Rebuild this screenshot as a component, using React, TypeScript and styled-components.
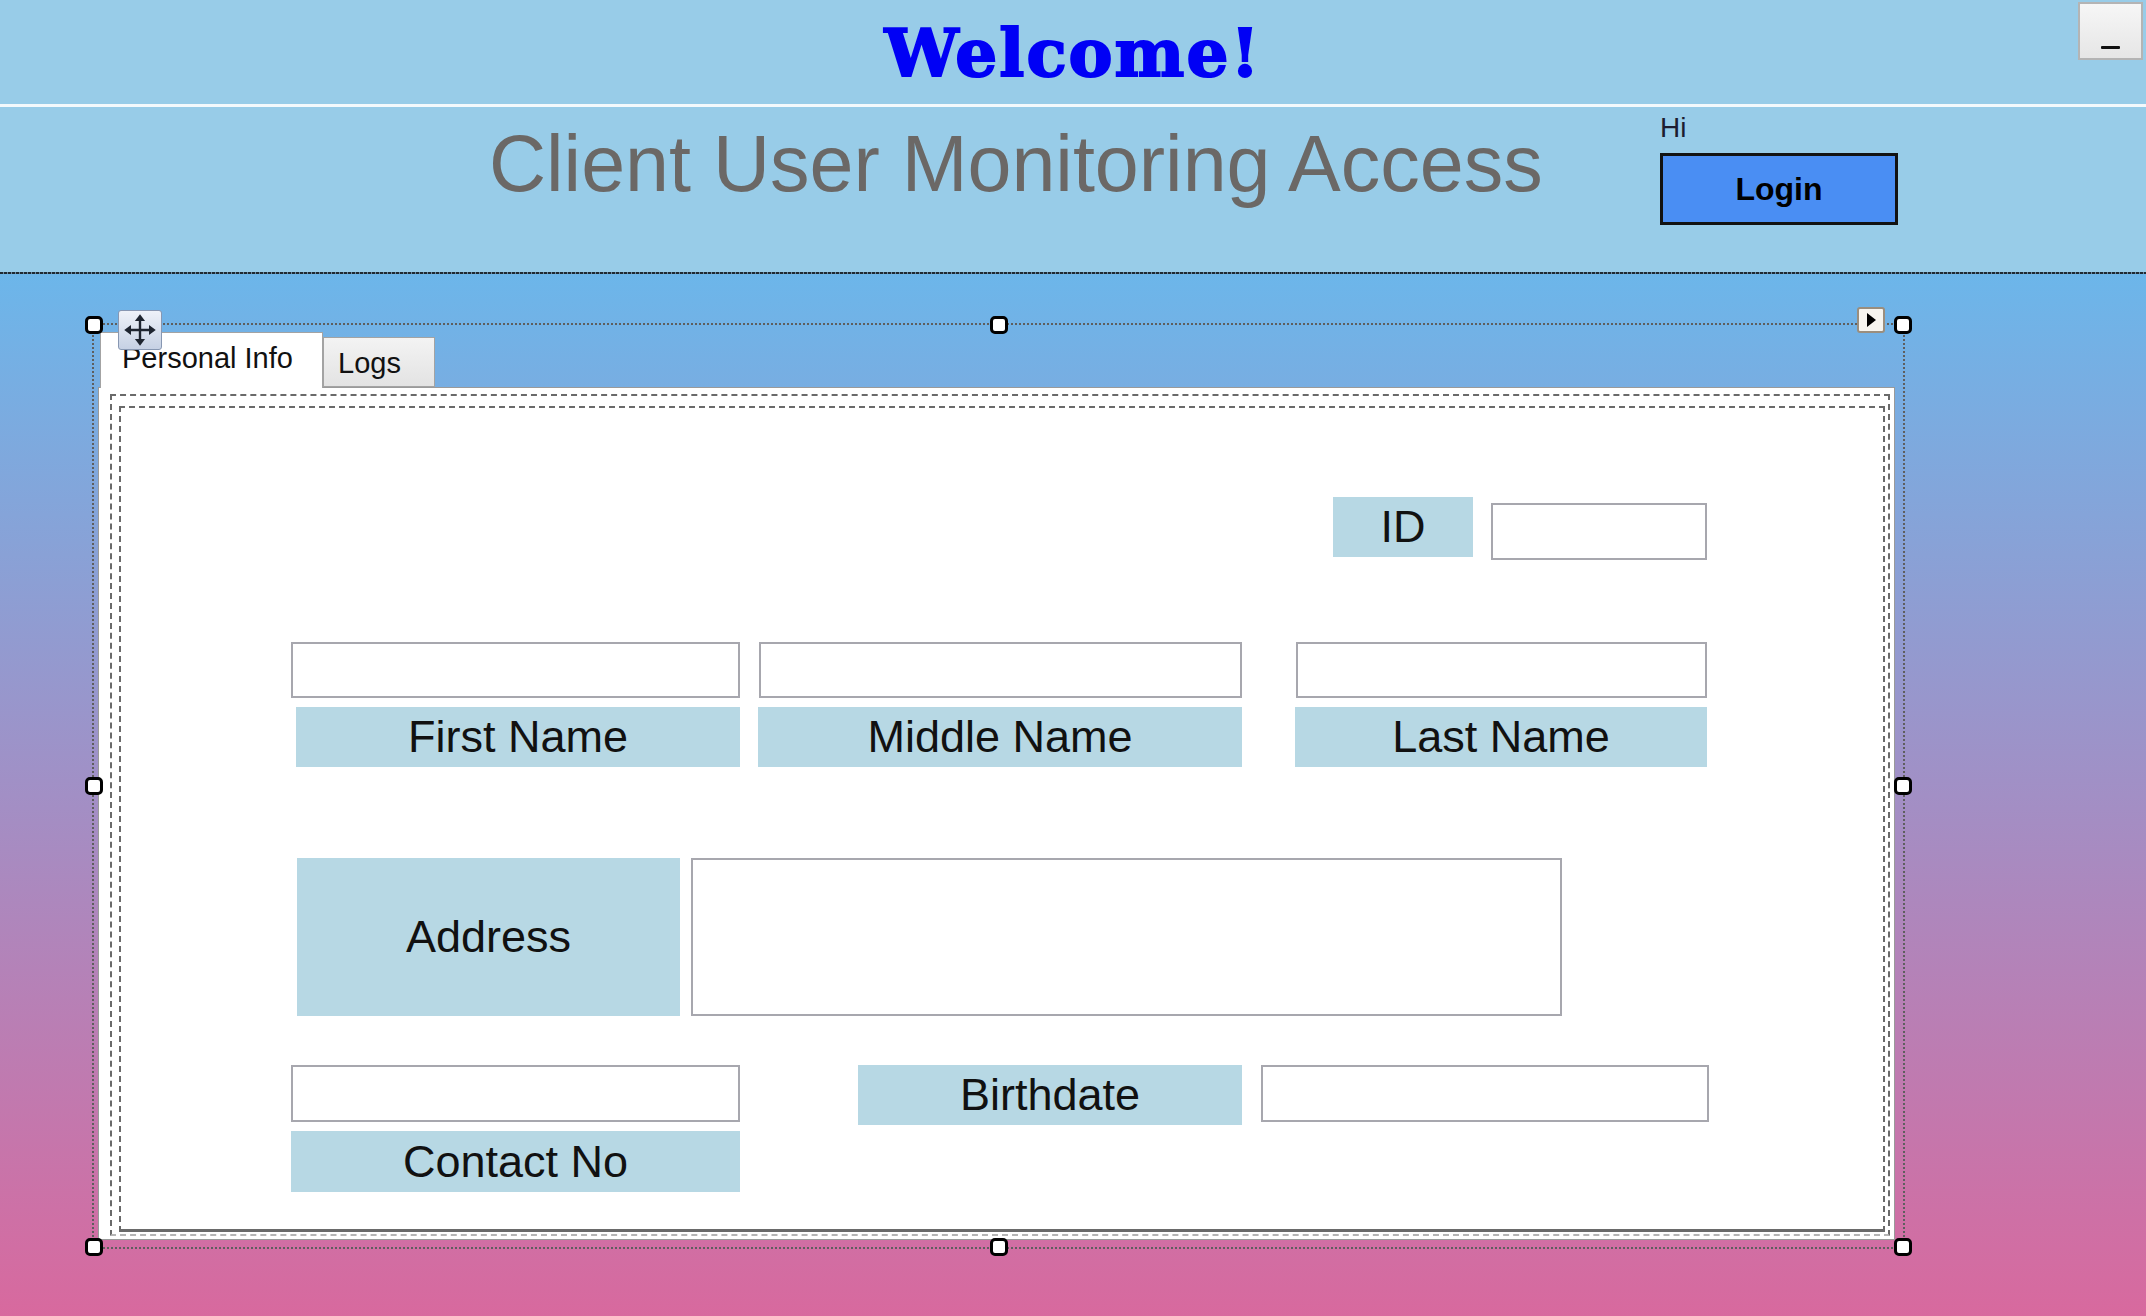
import React from "react";
import styled, { createGlobalStyle } from "styled-components";

const GlobalStyle = createGlobalStyle`
  html, body {
    margin: 0;
    padding: 0;
    height: 100%;
  }
  body {
    font-family: "Liberation Sans", Arial, sans-serif;
    overflow: hidden;
  }
  #root {
    height: 100%;
  }
`;

const Window = styled.div`
  height: 100%;
  display: flex;
  flex-direction: column;
`;

const WelcomeBar = styled.div`
  display: grid;
  grid-template-columns: 1fr auto 1fr;
  height: 104px;
  background: #98cce8;
  border-bottom: 3px solid #f3f9fc;
`;

const WelcomeText = styled.h1`
  grid-column: 2;
  margin: 20px 0 0;
  font-family: "DejaVu Serif", serif;
  font-weight: 700;
  font-size: 66px;
  letter-spacing: 2px;
  line-height: 1;
  color: #0000f5;
  -webkit-text-stroke: 2px #0000f5;
`;

const MinimizeButton = styled.div`
  grid-column: 3;
  justify-self: end;
  align-self: start;
  margin: 2px 3px 0 0;
  width: 65px;
  height: 58px;
  box-sizing: border-box;
  border: 2px solid #b4b4b4;
  background: linear-gradient(180deg, #f6f6f6 0%, #e6e6e6 100%);
  display: flex;
  align-items: flex-end;
  justify-content: center;
  padding-bottom: 9px;
`;

const MinimizeDash = styled.span`
  width: 19px;
  height: 3px;
  background: #111;
  border-radius: 1px;
`;

const TitleBar = styled.div`
  display: flex;
  justify-content: space-between;
  align-items: flex-start;
  height: 165px;
  box-sizing: border-box;
  padding: 0 248px 0 489px;
  background: #98cce8;
`;

const Title = styled.h2`
  margin: 17px 0 0;
  font-size: 79px;
  font-weight: 400;
  line-height: 1;
  color: #6b6866;
  white-space: nowrap;
`;

const UserBox = styled.div`
  display: flex;
  flex-direction: column;
  align-items: flex-start;
  margin-top: 7px;
`;

const Greeting = styled.span`
  font-size: 28px;
  line-height: 1;
  color: #1c1c30;
`;

const LoginButton = styled.button`
  margin-top: 11px;
  width: 238px;
  height: 72px;
  box-sizing: border-box;
  border: 3px solid #121212;
  background: #4a8ef3;
  font-family: "Liberation Sans", Arial, sans-serif;
  font-weight: 700;
  font-size: 32px;
  color: #000;
  padding: 0;
`;

const DashRule = styled.div`
  height: 2px;
  background: repeating-linear-gradient(90deg, #1f2a33 0 3px, #6a8aa3 3px 4px);
`;

const Canvas = styled.div`
  flex: 1;
  background: linear-gradient(180deg, #6cb6ea 0%, #a28fc5 50%, #d8699e 100%);
  padding: 49px 0 0 92px;
`;

const SelectionFrame = styled.div`
  position: relative;
  width: 1813px;
  height: 926px;
  box-sizing: border-box;
  border: 2px dotted #5e5e5e;
  padding: 7px 8px 7px 4px;
`;

const Handle = styled.span<{ $x: number; $y: number }>`
  position: absolute;
  left: ${({ $x }) => $x}%;
  top: ${({ $y }) => $y}%;
  transform: translate(-50%, -50%);
  width: 18px;
  height: 18px;
  box-sizing: border-box;
  border: 3px solid #000;
  border-radius: 5px;
  background: #fff;
  z-index: 3;
`;

const MoveGlyph = styled.div`
  position: absolute;
  left: 24px;
  top: -15px;
  width: 44px;
  height: 40px;
  box-sizing: border-box;
  border: 1px solid #8797b2;
  border-radius: 3px;
  background: linear-gradient(180deg, #eef2f9 0%, #c6d1e4 100%);
  display: flex;
  align-items: center;
  justify-content: center;
  z-index: 3;
`;

const SmartTag = styled.div`
  position: absolute;
  left: 1763px;
  top: -18px;
  width: 28px;
  height: 26px;
  box-sizing: border-box;
  border: 2px solid #9a8e7e;
  border-radius: 3px;
  background: #f7f5f0;
  display: flex;
  align-items: center;
  justify-content: center;
  z-index: 3;
`;

const TabControl = styled.div`
  height: 100%;
  display: flex;
  flex-direction: column;
`;

const TabStrip = styled.div`
  display: flex;
  align-items: flex-end;
  height: 55px;
  padding-left: 2px;
  position: relative;
  z-index: 1;
`;

const Tab = styled.div<{ $active?: boolean; $w: number; $pl: number }>`
  width: ${({ $w }) => $w}px;
  height: ${({ $active }) => ($active ? 56 : 50)}px;
  margin-bottom: ${({ $active }) => ($active ? -1 : 0)}px;
  box-sizing: border-box;
  border: 1px solid #a3a3a3;
  border-bottom: ${({ $active }) => ($active ? "none" : "1px solid #a3a3a3")};
  background: ${({ $active }) =>
    $active ? "#fff" : "linear-gradient(180deg, #f3f3f3 0%, #e3e3e3 100%)"};
  padding: 11px 0 0 ${({ $pl }) => $pl}px;
  font-size: 29px;
  line-height: 1;
  color: #111;
  white-space: nowrap;
`;

const TabPage = styled.div`
  flex: 1;
  display: flex;
  background: #fff;
  border: 1px solid #9a9a9a;
  padding: 6px 4px 3px 11px;
`;

const OuterPanel = styled.div`
  flex: 1;
  display: flex;
  border: 2px dashed #6a6a6a;
  border-bottom-color: #b5b5b5;
  padding: 10px 3px 2px 7px;
`;

const InnerPanel = styled.div`
  flex: 1;
  display: flex;
  flex-direction: column;
  border: 2px dashed #6a6a6a;
  border-bottom: 3px solid #6a6a6a;
`;

const FormRow = styled.div<{ $top: number; $left: number; $gap?: number }>`
  display: flex;
  align-items: flex-start;
  margin-top: ${({ $top }) => $top}px;
  padding-left: ${({ $left }) => $left}px;
  gap: ${({ $gap }) => $gap ?? 0}px;
`;

const FieldStack = styled.div<{ $w: number; $ml?: number }>`
  display: flex;
  flex-direction: column;
  gap: 9px;
  width: ${({ $w }) => $w}px;
  margin-left: ${({ $ml }) => $ml ?? 0}px;
`;

const FieldLabel = styled.div<{ $w?: number; $h: number; $ml?: number }>`
  width: ${({ $w }) => ($w ? `${$w}px` : "auto")};
  height: ${({ $h }) => $h}px;
  margin-left: ${({ $ml }) => $ml ?? 0}px;
  background: #b7d8e4;
  display: flex;
  align-items: center;
  justify-content: center;
  font-size: 45px;
  color: #111;
  white-space: nowrap;
`;

const TextBox = styled.input<{ $w?: number; $h: number; $mt?: number; $ml?: number }>`
  width: ${({ $w }) => ($w ? `${$w}px` : "100%")};
  height: ${({ $h }) => $h}px;
  margin: ${({ $mt }) => $mt ?? 0}px 0 0 ${({ $ml }) => $ml ?? 0}px;
  box-sizing: border-box;
  border: 2px solid #a7a7ae;
  background: #fff;
  padding: 0 8px;
  font-family: "Liberation Sans", Arial, sans-serif;
  font-size: 36px;
  outline: none;
`;

const TextArea = styled.textarea<{ $w: number; $h: number }>`
  width: ${({ $w }) => $w}px;
  height: ${({ $h }) => $h}px;
  box-sizing: border-box;
  border: 2px solid #a7a7ae;
  background: #fff;
  padding: 6px 8px;
  font-family: "Liberation Sans", Arial, sans-serif;
  font-size: 36px;
  resize: none;
  outline: none;
`;

const handles = [
  [0, 0],
  [50, 0],
  [100, 0],
  [0, 50],
  [100, 50],
  [0, 100],
  [50, 100],
  [100, 100],
];

const MoveIcon = () => (
  <svg width="36" height="36" viewBox="0 0 24 24">
    <path d="M12 5v14M5 12h14" stroke="#1e2530" strokeWidth="1.6" />
    <polygon points="12,1.5 8.6,6 15.4,6" fill="#1e2530" />
    <polygon points="12,22.5 8.6,18 15.4,18" fill="#1e2530" />
    <polygon points="1.5,12 6,8.6 6,15.4" fill="#1e2530" />
    <polygon points="22.5,12 18,8.6 18,15.4" fill="#1e2530" />
  </svg>
);

const ArrowIcon = () => (
  <svg width="12" height="16" viewBox="0 0 12 16">
    <polygon points="2,1 11,8 2,15" fill="#000" />
  </svg>
);

const App: React.FC = () => {
  return (
    <Window>
      <GlobalStyle />
      <WelcomeBar>
        <WelcomeText>Welcome!</WelcomeText>
        <MinimizeButton>
          <MinimizeDash />
        </MinimizeButton>
      </WelcomeBar>

      <TitleBar>
        <Title>Client User Monitoring Access</Title>
        <UserBox>
          <Greeting>Hi</Greeting>
          <LoginButton>Login</LoginButton>
        </UserBox>
      </TitleBar>
      <DashRule />

      <Canvas>
        <SelectionFrame>
          {handles.map(([x, y]) => (
            <Handle key={`${x}-${y}`} $x={x} $y={y} />
          ))}
          <MoveGlyph>
            <MoveIcon />
          </MoveGlyph>
          <SmartTag>
            <ArrowIcon />
          </SmartTag>

          <TabControl>
            <TabStrip>
              <Tab $active $w={223} $pl={21}>
                Personal Info
              </Tab>
              <Tab $w={112} $pl={14}>
                Logs
              </Tab>
            </TabStrip>
            <TabPage>
              <OuterPanel>
                <InnerPanel>
                  <FormRow $top={89} $left={1212} $gap={18}>
                    <FieldLabel $w={140} $h={60}>
                      ID
                    </FieldLabel>
                    <TextBox $w={216} $h={57} $mt={6} />
                  </FormRow>

                  <FormRow $top={82} $left={170}>
                    <FieldStack $w={449}>
                      <TextBox $h={56} />
                      <FieldLabel $h={60} $ml={5}>
                        First Name
                      </FieldLabel>
                    </FieldStack>
                    <FieldStack $w={484} $ml={18}>
                      <TextBox $h={56} $ml={1} $w={483} />
                      <FieldLabel $h={60}>Middle Name</FieldLabel>
                    </FieldStack>
                    <FieldStack $w={412} $ml={53}>
                      <TextBox $h={56} $ml={1} $w={411} />
                      <FieldLabel $h={60}>Last Name</FieldLabel>
                    </FieldStack>
                  </FormRow>

                  <FormRow $top={91} $left={176} $gap={11}>
                    <FieldLabel $w={383} $h={158}>
                      Address
                    </FieldLabel>
                    <TextArea $w={871} $h={158} />
                  </FormRow>

                  <FormRow $top={49} $left={170}>
                    <FieldStack $w={449}>
                      <TextBox $h={57} />
                      <FieldLabel $h={61}>Contact No</FieldLabel>
                    </FieldStack>
                    <FieldLabel $w={384} $h={60} $ml={118}>
                      Birthdate
                    </FieldLabel>
                    <TextBox $w={448} $h={57} $ml={19} />
                  </FormRow>
                </InnerPanel>
              </OuterPanel>
            </TabPage>
          </TabControl>
        </SelectionFrame>
      </Canvas>
    </Window>
  );
};

export default App;
